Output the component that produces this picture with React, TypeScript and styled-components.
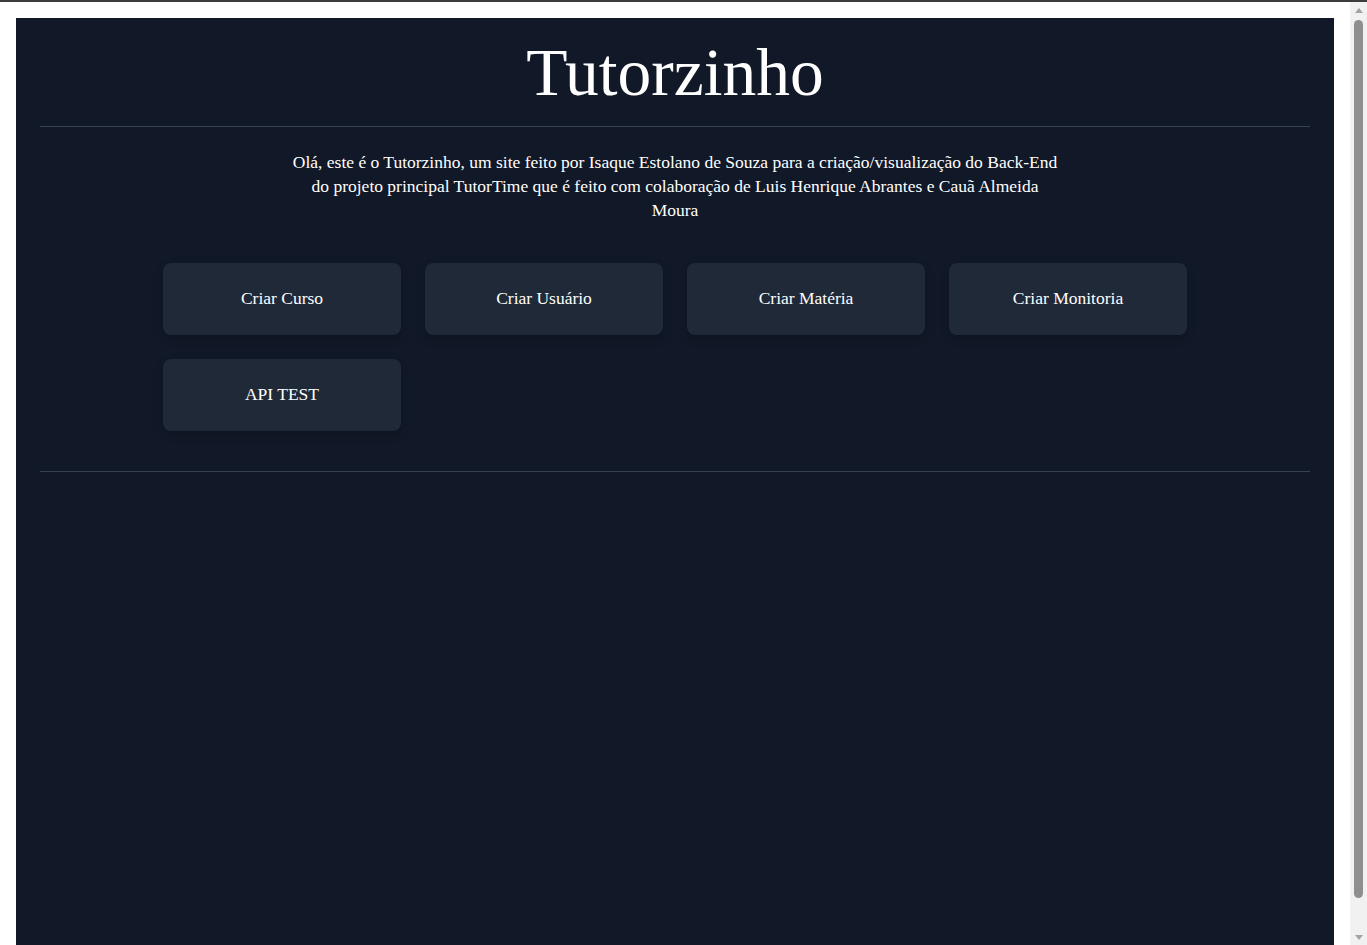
import React from "react";
import styled, { createGlobalStyle } from "styled-components";

const Global = createGlobalStyle`
  html {
    border-top: 2px solid #3c3c3c;
    background: #ffffff;
    padding-right: 17px;
  }
  body {
    margin: 0;
    font-family: "Liberation Serif", "Times New Roman", serif;
    color: #ffffff;
  }
  * { box-sizing: border-box; }
`;

const Page = styled.main`
  margin: 16px;
  min-height: 100vh;
  background: #111827;
  padding: 0 24px;
`;

const Header = styled.header`
  height: 109px;
  display: flex;
  align-items: center;
  justify-content: center;
  border-bottom: 1px solid #374151;
`;

const Title = styled.h1`
  margin: 0;
  font-size: 67.5px;
  font-weight: 400;
  line-height: 1;
  color: #ffffff;
  padding-top: 2px;
`;

const Intro = styled.p`
  max-width: 768px;
  margin: 23px auto 0;
  text-align: center;
  font-size: 17.5px;
  line-height: 24px;
  color: #ffffff;
`;

const Actions = styled.section`
  padding: 41px 0 40px;
  border-bottom: 1px solid #374151;
`;

const Grid = styled.div`
  max-width: 1024px;
  margin: 0 auto;
  display: grid;
  grid-template-columns: repeat(4, 1fr);
  gap: 24px;
`;

const ActionButton = styled.button`
  height: 72px;
  padding: 0 0 2px;
  border: none;
  border-radius: 8px;
  background: #1f2937;
  color: #ffffff;
  font-family: "Liberation Serif", "Times New Roman", serif;
  font-size: 17.5px;
  cursor: pointer;
  box-shadow: 0 4px 10px rgba(0, 0, 0, 0.18);
`;

/* imitation of the browser's classic scrollbar, fixed over the right edge */
const ScrollTrack = styled.div`
  position: fixed;
  top: 2px;
  right: 0;
  bottom: 0;
  width: 17px;
  background: #f1f1f1;
  display: flex;
  flex-direction: column;
  align-items: center;
  padding: 0 4px;
`;

const ScrollArrow = styled.div<{ $down?: boolean }>`
  height: 16px;
  width: 100%;
  display: flex;
  align-items: center;
  justify-content: center;
  flex: none;
  &::before {
    content: "";
    border-left: 4.5px solid transparent;
    border-right: 4.5px solid transparent;
    ${(p) => (p.$down ? "border-top: 5px solid #a3a3a3;" : "border-bottom: 5px solid #a3a3a3;")}
  }
`;

const ScrollThumb = styled.div`
  flex: none;
  width: 9px;
  height: 878px;
  margin-top: 2px;
  border-radius: 5px;
  background: #8f8f8f;
`;

const ScrollSpacer = styled.div`
  flex: 1;
`;

const actions = ["Criar Curso", "Criar Usuário", "Criar Matéria", "Criar Monitoria", "API TEST"];

export default function App() {
  return (
    <>
      <Global />
      <Page>
        <Header>
          <Title>Tutorzinho</Title>
        </Header>
        <Intro>
          Olá, este é o Tutorzinho, um site feito por Isaque Estolano de Souza para a criação/visualização do
          Back-End do projeto principal TutorTime que é feito com colaboração de Luis Henrique Abrantes e Cauã
          Almeida Moura
        </Intro>
        <Actions>
          <Grid>
            {actions.map((a) => (
              <ActionButton key={a}>{a}</ActionButton>
            ))}
          </Grid>
        </Actions>
      </Page>
      <ScrollTrack aria-hidden>
        <ScrollArrow />
        <ScrollThumb />
        <ScrollSpacer />
        <ScrollArrow $down />
      </ScrollTrack>
    </>
  );
}
